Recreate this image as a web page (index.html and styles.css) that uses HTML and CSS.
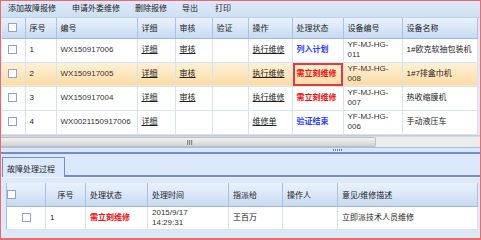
FILE: index.html
```html
<!DOCTYPE html>
<html>
<head>
<meta charset="utf-8">
<link rel="stylesheet" href="styles.css">
</head>
<body>
<div class="frame">
  <div class="toolbar">
    <span class="tb">添加故障报修</span>
    <span class="tb">申请外委维修</span>
    <span class="tb">删除报修</span>
    <span class="tb">导出</span>
    <span class="tb">打印</span>
  </div>
  <div class="grid-area">
    <table class="grid main">
      <colgroup>
        <col style="width:23px"><col style="width:31px"><col style="width:81px"><col style="width:38px"><col style="width:37px"><col style="width:36px"><col style="width:44px"><col style="width:51px"><col style="width:59px"><col style="width:75px">
      </colgroup>
      <thead>
        <tr><th class="ck"><span class="box"></span></th><th>序号</th><th>编号</th><th>详细</th><th>审核</th><th>验证</th><th>操作</th><th>处理状态</th><th>设备编号</th><th>设备名称</th></tr>
      </thead>
      <tbody>
        <tr><td class="ck"><span class="box"></span></td><td>1</td><td class="code">WX150917006</td><td><a>详细</a></td><td><a>审核</a></td><td></td><td><a>执行维修</a></td><td class="blue">列入计划</td><td class="dev">YF-MJ-HG-<br>011</td><td>1#欧克软抽包装机</td></tr>
        <tr class="sel"><td class="ck"><span class="box"></span></td><td>2</td><td class="code">WX150917005</td><td><a>详细</a></td><td><a>审核</a></td><td></td><td><a>执行维修</a></td><td class="red boxed">需立刻维修</td><td class="dev">YF-MJ-HG-<br>008</td><td>1#7排盒巾机</td></tr>
        <tr><td class="ck"><span class="box"></span></td><td>3</td><td class="code">WX150917004</td><td><a>详细</a></td><td><a>审核</a></td><td></td><td><a>执行维修</a></td><td class="red">需立刻维修</td><td class="dev">YF-MJ-HG-<br>007</td><td>热收缩膜机</td></tr>
        <tr><td class="ck"><span class="box"></span></td><td>4</td><td class="code">WX0021150917006</td><td><a>详细</a></td><td></td><td></td><td><a>维修单</a></td><td class="blue">验证结束</td><td class="dev">YF-MJ-HG-<br>006</td><td>手动液压车</td></tr>
      </tbody>
    </table>
  </div>
  <div class="hscroll"><div class="thumb"><span class="grip"></span></div></div>
  <div class="splitter"><span class="dots"></span></div>
  <div class="tabs"><div class="tab">故障处理过程</div><div class="tabline"></div></div>
  <div class="lower">
    <table class="grid sub">
      <colgroup>
        <col style="width:39px"><col style="width:40px"><col style="width:62px"><col style="width:81px"><col style="width:54px"><col style="width:55px"><col style="width:140px">
      </colgroup>
      <thead>
        <tr><th class="ckc"><span class="box"></span></th><th class="center">序号</th><th>处理状态</th><th>处理时间</th><th>指派给</th><th>操作人</th><th>意见/维修描述</th></tr>
      </thead>
      <tbody>
        <tr><td class="ckc"><span class="box"></span></td><td>1</td><td class="red">需立刻维修</td><td class="dev">2015/9/17<br>14:29:31</td><td>王百万</td><td></td><td>立即派技术人员维修</td></tr>
      </tbody>
    </table>
  </div>
</div>
</body>
</html>
```

FILE: styles.css
```css
* { box-sizing: border-box; }
html, body { margin: 0; padding: 0; background: #fff; }
body { font-family: "Liberation Sans", "Noto Sans CJK SC", sans-serif; font-size: 8px; color: #222; }

.frame {
  width: 481px; height: 240px;
  border: 1px solid #ee6a6a;
  border-bottom-width: 2px;
  background: #dbe7f7;
  overflow: hidden;
  display: flex; flex-direction: column;
}

.toolbar {
  height: 17px;
  display: flex; align-items: center;
  padding-left: 7px;
  background: linear-gradient(#dde9f8, #cfdff3);
  border-bottom: 1px solid #bcd0ea;
}
.tb { line-height: 12px; }
.tb:nth-child(1) { margin-right: 16px; }
.tb:nth-child(2) { margin-right: 15px; }
.tb:nth-child(3) { margin-right: 15px; }
.tb:nth-child(4) { margin-right: 17px; }

.grid-area {
  height: 118px;
  padding-left: 1px;
  background: #dde9f8;
  border-bottom: 1px solid #b9cde9;
}

.grid { border-collapse: collapse; table-layout: fixed; }
.main { width: 475px; background: #fff; border-bottom: 1px solid #a7c0e2; }
.grid th {
  height: 20px;
  font-weight: normal;
  text-align: left;
  padding: 0 4px;
  background: linear-gradient(#e9f1fb 0%, #d9e7f7 50%, #c6d9f0 100%);
  border-right: 1px solid #a9c2e3;
  border-bottom: 1px solid #9fb9de;
  white-space: nowrap;
}
.grid td {
  height: 24px;
  padding: 0 4px;
  border-right: 1px solid #d4e2f3;
  border-bottom: 1px solid #d4e2f3;
  white-space: nowrap;
  overflow: hidden;
  line-height: 10px;
}
.main td:first-child, .main th:first-child { padding: 0 0 0 6px; }
.code { color: #333; }
.dev { color: #333; }
a { text-decoration: underline; color: #222; }
.blue { color: #2d3dff; font-weight: bold; }
.red { color: #ee1111; font-weight: bold; }
.sel td { background: linear-gradient(#fff1d6, #fbdba5); }
.sel td.boxed { box-shadow: inset 0 0 0 2px #e23b3b; }

.box {
  display: inline-block; width: 9px; height: 9px;
  border: 1px solid #8ea5c6; background: #fff;
  vertical-align: middle;
}
.ckc { text-align: center; }
.grid th.center { text-align: center; }

.hscroll {
  height: 11px;
  background: #ececec;
  border-top: 1px solid #d8d8d8;
}
.thumb {
  width: 375px; height: 10px;
  background: linear-gradient(#f2f2f2, #d2d2d2);
  border: 1px solid #bdbdbd;
  border-left: none;
  border-radius: 0 2px 2px 0;
  padding-left: 186px;
}
.grip {
  display: block; width: 6px; height: 5px; margin-top: 2px;
  background: repeating-linear-gradient(90deg, #888 0 1px, #ccc 1px 2px);
}

.splitter {
  height: 5px;
  background: #dbe7f7;
  border-top: 1px solid #a8c0e4;
  padding-left: 332px;
}
.dots {
  display: block; width: 10px; height: 2px; margin-top: 1px;
  background: repeating-linear-gradient(90deg, #6c7f9c 0 1px, transparent 1px 2px);
}

.tabs {
  height: 25px;
  border-top: 2px solid #6f8fcb;
  background: #dbe8fb;
  display: flex; align-items: flex-end;
  padding-left: 1px;
}
.tab {
  width: 63px; height: 20px;
  border: 1px solid #6f8fcb; border-bottom: none;
  background: #dce9fb;
  padding: 5px 0 0 4px;
}
.tabline { flex: 1; border-bottom: 2px solid #6f8fcb; }

.lower {
  flex: 1;
  background: #dde9f8;
  padding: 5px 0 0 5px;
  border-top: 1px solid #eef4fd;
}
.sub { width: 471px; background: #fff; border-left: 1px solid #a7c0e2; border-bottom: 1px solid #a7c0e2; }
.sub th { height: 23px; }
.sub td { height: 23px; }
.sub td:first-child, .sub th:first-child { padding: 0; }
```
